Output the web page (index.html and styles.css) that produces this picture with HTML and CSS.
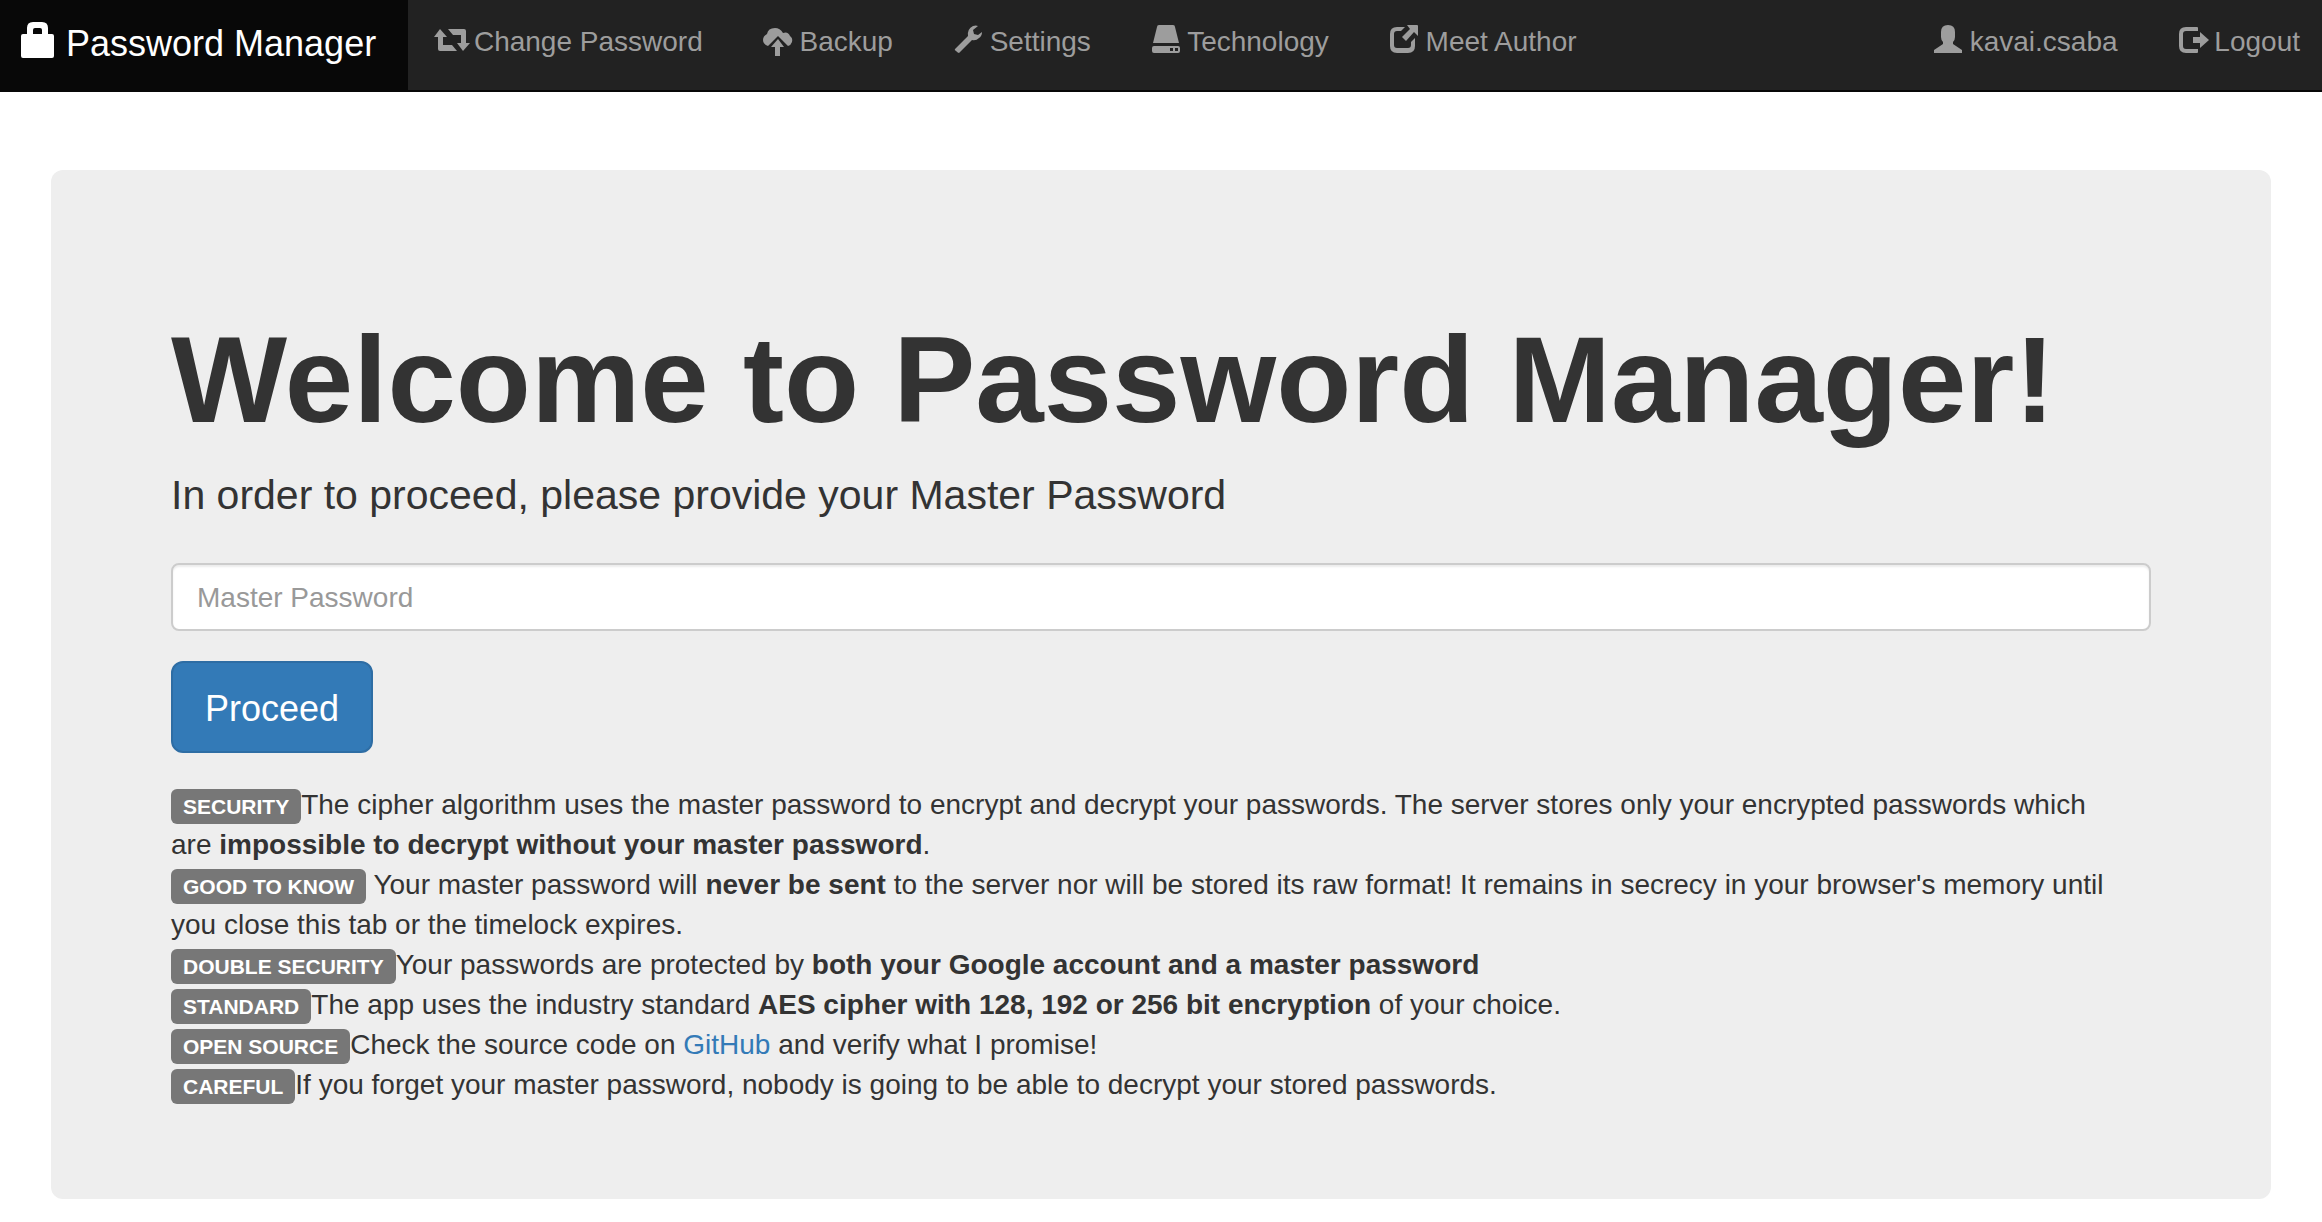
FILE: index.html
```html
<!DOCTYPE html>
<html lang="en">
<head>
<meta charset="utf-8">
<title>Password Manager</title>
<meta name="viewport" content="width=device-width, initial-scale=1">
<link rel="stylesheet" href="styles.css">
</head>
<body>
<nav class="navbar">
  <a class="brand" href="#"><svg class="icon icon-brand" viewBox="0 0 36 36" aria-hidden="true"><path fill-rule="evenodd" d="M7 12V6Q7 0 13 0H22Q28 0 28 6V12H32Q34 12 34 14V34Q34 36 32 36H3Q1 36 1 34V14Q1 12 3 12ZM13 12H22V8Q22 6 20 6H15Q13 6 13 8Z"/></svg> Password Manager</a>
  <ul class="nav">
    <li><a href="#"><svg class="icon" viewBox="0 0 28 28" aria-hidden="true"><path d="M2 4L9 12H5V20H14L19 26H2Q0 26 0 24V12H-4ZM10 4H26Q28 4 28 6V18H32L25 26L19 18H23V10H15Z"/></svg> Change Password</a></li>
    <li><a href="#"><svg class="icon" viewBox="0 0 28 28" aria-hidden="true"><path d="M4 21Q-1 19 -1 15Q-1 11 3 9Q4 3 11 3Q16 3 19 8Q24 6 26 11Q29 13 28 17Q27 20 24 21L14 11ZM14 14L20 22H16V31H11V22H7Z"/></svg> Backup</a></li>
    <li><a href="#"><svg class="icon" viewBox="0 0 28 28" aria-hidden="true"><path d="M1 24L14 11Q13 4 19 1Q22 0 24 1L19 5L20 9L24 10L28 7Q28 11 25 13Q22 16 18 15L5 28Q4 28 2 26Q0 25 1 24Z"/></svg> Settings</a></li>
    <li><a href="#"><svg class="icon" viewBox="0 0 28 28" aria-hidden="true"><path fill-rule="evenodd" d="M7 0H21Q23 0 23 2L27 18H1L5 2Q5 0 7 0ZM2 21H26Q28 21 28 23V26Q28 28 26 28H2Q0 28 0 26V23Q0 21 2 21ZM18 23V26H21V23ZM23 23V26H26V23Z"/></svg> Technology</a></li>
    <li><a href="#"><svg class="icon" viewBox="0 0 28 28" aria-hidden="true"><path d="M15 2L11 6H7Q4 6 4 9V20Q4 23 7 23H18Q21 23 21 20V17L25 13V21Q25 28 18 28H7Q0 28 0 21V9Q0 2 7 2ZM17 0H27Q28 0 28 1V11L24 7L16 16L12 12L20 4Z"/></svg> Meet Author</a></li>
  </ul>
  <ul class="nav nav-right">
    <li><a href="#"><svg class="icon" viewBox="0 0 28 28" aria-hidden="true"><path d="M14 0Q21 0 21 7V12Q21 15 19 17V19L28 25V28H0V25L9 19V17Q7 15 7 12V7Q7 0 14 0Z"/></svg> kavai.csaba</a></li>
    <li><a href="#"><svg class="icon" viewBox="0 0 28 28" aria-hidden="true"><path d="M7 2H18Q19 2 19 3V6H7Q4 6 4 9V21Q4 24 7 24H19V27Q19 28 18 28H7Q0 28 0 21V9Q0 2 7 2ZM21 7L30 15L21 23V18H14V12H21Z"/></svg> Logout</a></li>
  </ul>
</nav>
<main class="jumbotron">
  <h1>Welcome to Password Manager!</h1>
  <p class="lead" id="prompt">In order to proceed, please provide your Master Password</p>
  <form>
    <input class="field" type="password" placeholder="Master Password" aria-labelledby="prompt">
    <button class="button" type="button">Proceed</button>
  </form>
  <div class="notes">
    <div><span class="label">SECURITY</span>The cipher algorithm uses the master password to encrypt and decrypt your passwords. The server stores only your encrypted passwords which are <strong>impossible to decrypt without your master password</strong>.</div>
    <div><span class="label">GOOD TO KNOW</span> Your master password will <strong>never be sent</strong> to the server nor will be stored its raw format! It remains in secrecy in your browser's memory until you close this tab or the timelock expires.</div>
    <div><span class="label">DOUBLE SECURITY</span>Your passwords are protected by <strong>both your Google account and a master password</strong></div>
    <div><span class="label">STANDARD</span>The app uses the industry standard <strong>AES cipher with 128, 192 or 256 bit encryption</strong> of your choice.</div>
    <div><span class="label">OPEN SOURCE</span>Check the source code on <a href="#">GitHub</a> and verify what I promise!</div>
    <div><span class="label">CAREFUL</span>If you forget your master password, nobody is going to be able to decrypt your stored passwords.</div>
  </div>
</main>
</body>
</html>
```
FILE: styles.css
```css
* { box-sizing: border-box; }
body {
  margin: 0;
  background: #fff;
  color: #333;
  font: 28px/40px "Helvetica Neue", Helvetica, "Liberation Sans", Arial, sans-serif;
}
a { color: #337ab7; text-decoration: none; }

.navbar {
  display: flex;
  min-height: 92px;
  background: #222;
  border-bottom: 2px solid #080808;
}
.brand {
  padding: 22px 32px 0 20px;
  background: #080808;
  color: #fff;
  font-size: 36px;
  white-space: nowrap;
}
.nav {
  display: flex;
  margin: 0;
  padding: 0;
  list-style: none;
}
.nav a {
  display: block;
  padding: 22px 31px 0 30px;
  color: #9d9d9d;
  white-space: nowrap;
}
.nav-right { margin-left: auto; }
.nav-right li:last-child a { padding-right: 22px; }
.icon {
  width: 28px;
  height: 28px;
  fill: currentColor;
  overflow: visible;
  vertical-align: -2px;
}
.icon-brand { width: 36px; height: 36px; }

.jumbotron {
  margin: 78px 51px 24px;
  padding: 140px 120px 94px;
  border-radius: 12px;
  background: #eee;
}
h1 {
  margin: 0 0 16px;
  font-size: 123px;
  line-height: 139px;
  font-weight: 700;
}
.lead {
  margin: 0 0 38px;
  font-size: 41px;
  line-height: 60px;
  font-weight: 200;
}
.field {
  display: block;
  width: 100%;
  height: 68px;
  margin-bottom: 30px;
  padding: 14px 24px 12px;
  border: 2px solid #ccc;
  border-radius: 8px;
  background: #fff;
  box-shadow: inset 0 2px 2px rgba(0, 0, 0, .075);
  color: #555;
  font: inherit;
}
.field::placeholder { color: #999; opacity: 1; }
.button {
  display: block;
  height: 92px;
  padding: 3px 32px 0;
  border: 2px solid #2e6da4;
  border-radius: 12px;
  background: #337ab7;
  color: #fff;
  font: inherit;
  font-size: 36px;
}
.notes { padding: 32px 24px 0 0; }
.notes strong { font-weight: 700; }
.label {
  padding: 6px 12px;
  border-radius: 6px;
  background: #777;
  color: #fff;
  font-size: 21px;
  line-height: 21px;
  font-weight: 700;
}
```
